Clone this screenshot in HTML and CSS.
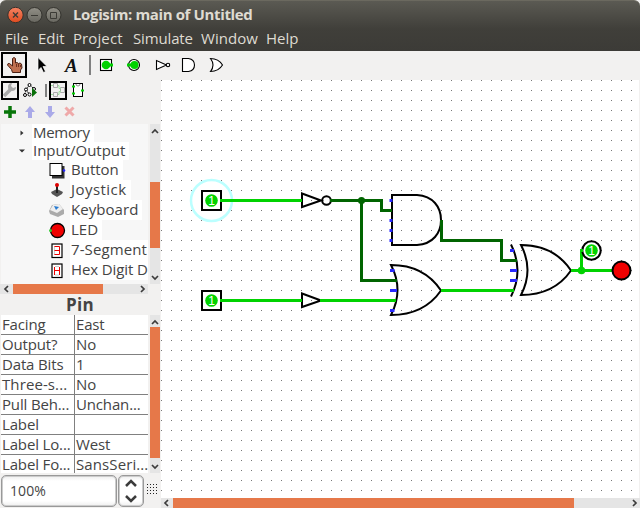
FILE: index.html
```html
<!DOCTYPE html>
<html lang="en">
<head>
<meta charset="utf-8">
<title>Logisim: main of Untitled</title>
<link rel="stylesheet" href="styles.css">
</head>
<body>
<div class="window">
  <header class="chrome">
    <div class="titlebar">
      <svg class="controls" width="56" height="18" viewBox="0 0 56 18">
        <defs>
          <linearGradient id="red" x1="0" y1="0" x2="0" y2="1"><stop offset="0" stop-color="#f58363"/><stop offset="1" stop-color="#df4b1f"/></linearGradient>
          <linearGradient id="gray" x1="0" y1="0" x2="0" y2="1"><stop offset="0" stop-color="#929087"/><stop offset="1" stop-color="#686760"/></linearGradient>
        </defs>
        <g stroke="#33322d"><circle cx="8.5" cy="9" r="7.7" fill="url(#red)"/><circle cx="27.5" cy="9" r="7.5" fill="url(#gray)"/><circle cx="46.5" cy="9" r="7.5" fill="url(#gray)"/></g>
        <g stroke="#3b3a35" fill="none"><path stroke-width="1.4" d="M6 6.5l5 5m0-5l-5 5"/><path d="M24 9.5h7"/><path d="M43.5 6.5h6v6h-6z"/></g>
      </svg>
      <h1 class="title">Logisim: main of Untitled</h1>
    </div>
    <nav class="menubar"><span class="m-file">File</span><span class="m-edit">Edit</span><span class="m-project">Project</span><span class="m-simulate">Simulate</span><span class="m-window">Window</span><span class="m-help">Help</span></nav>
  </header>

  <div class="toolbar">
    <svg width="240" height="29" viewBox="0 0 240 29">
      <rect x="2" y="2" width="24" height="24" fill="#f2f1f0" stroke="#000" stroke-width="2"/>
      <path d="M12.500 14V7.500q1.500-2 3 0v4.500l1.500-.5 1.500 1 1.500-.5 1.500 1 .5 4-1.500 2v2.500h-8l-1-3-4-4.500q0-2 2-1.500l3 2.500z" fill="#c07050" stroke="#4a2015"/>
      <path d="M16.500 13v3M18.500 13v3M20.500 14v2" stroke="#70301c"/>
      <path d="M38 6.500v13l3-3 2.500 5 2-1-2.500-5h4z" fill="#000" stroke="#fff" stroke-width=".7"/>
      <text x="65" y="21" class="text-tool">A</text>
      <path d="M90 4v20" stroke="#808080" stroke-width="2"/>
      <g fill="#fff" stroke="#000" stroke-width="1.100">
        <rect x="100.500" y="8.500" width="11" height="11"/>
        <circle cx="134" cy="14" r="5.500"/>
        <path d="M156.500 9.500v9l10-4.500z"/><circle cx="168" cy="14" r="1.700"/>
        <path d="M182.500 7.500h6q6 1 6 6.500t-6 6.500h-6z"/>
        <path d="M210.500 7.500q8 0 12 6.500q-4 6.500-12 6.500q5-6.500 0-13z"/>
      </g>
      <g fill="#00d200"><circle cx="106" cy="14" r="4.300"/><path d="M108 12.500h5v3h-5z"/><circle cx="134.500" cy="14" r="4"/><path d="M127 12.500h5v3h-5z"/></g>
    </svg>
  </div>

  <main class="workspace">
    <aside class="sidebar">
      <svg class="explorer-tools" width="160" height="44" viewBox="0 0 160 44">
        <g fill="#f2f1f0" stroke="#000" stroke-width="2"><rect x="2" y="2" width="16" height="17"/><rect x="50" y="2" width="16" height="17"/></g>
        <path d="M4 16l7-7" stroke="#aaa" stroke-width="3.500"/><path d="M16 7l-3 1-2-2 1-3q-4 0-4 4t4 4 4-4z" fill="#aaa"/>
        <path d="M29.500 5L26 9.500L24.500 15M30 5l5 5M26 9l3 5" stroke="#000" fill="none" stroke-dasharray="2 1"/>
        <g fill="#fff" stroke="#000"><circle cx="29.500" cy="5" r="1.500"/><circle cx="26" cy="9.500" r="1.500"/><circle cx="34" cy="9" r="1.500"/><circle cx="29.500" cy="14.500" r="1.500"/><circle cx="25" cy="15" r="1.500"/></g><path d="M32 8v9l5-4.500z" fill="#087008"/>
        <path d="M46 4v13" stroke="#808080" stroke-width="2"/>
        <g fill="none" stroke="#aaa"><path d="M53.500 3.500h4v4h-4zM53.500 12.500h4v4h-4zM60.500 7.500h4v5h-4z"/></g><path d="M51 5.500h2m5 0h1v3h2M51 14.500h2m5 0h1v-3h2" fill="none" stroke="#9cdf9c"/>
        <rect x="73.500" y="3.500" width="9" height="13" fill="#fff" stroke="#000"/><path d="M76 4q0 2 2 2t2-2" fill="none" stroke="#888"/><path d="M72 6.500h3M72 13.500h3M81 10.500h3" stroke="#00d200" stroke-width="2"/>
        <path d="M10 26v12M4 32h12" stroke="#087508" stroke-width="3.500"/>
        <path d="M30 26l5 6h-3v6h-4v-6h-3zM50 38l5-6h-3v-6h-4v6h-3z" fill="#aaaae8"/>
        <path d="M65.500 27.500l8 8m0-8l-8 8" stroke="#efa9a9" stroke-width="3"/>
      </svg>

      <section class="tree-pane">
        <div class="tree">
          <div class="branch"><svg class="toggle" viewBox="0 0 8 8"><path d="M2.500 1.500v5l3-2.500z"/></svg><span class="label memory">Memory</span></div>
          <div class="branch"><svg class="toggle" viewBox="0 0 8 8"><path d="M1 2.500h6l-3 3z"/></svg><span class="label io">Input/Output</span></div>
          <div class="leaf"><svg viewBox="0 0 18 18"><path d="M4 16h11V5" fill="none" stroke="#333" stroke-width="3"/><rect x="2" y="2.500" width="12" height="12" fill="#fff" stroke="#000"/><circle cx="16" cy="9.500" r="1.300" fill="#22f"/></svg><span class="label">Button</span></div>
          <div class="leaf"><svg viewBox="0 0 18 18"><path d="M3 11l6-3 6 3-1 2-5 3-5-3z" fill="#555"/><path d="M9 4v8" stroke="#222" stroke-width="2"/><circle cx="9" cy="4" r="2" fill="#d00"/></svg><span class="label joy">Joystick</span></div>
          <div class="leaf"><svg viewBox="0 0 18 18"><path d="M1 10l3-6 7-1 5 6 0 4-6 3-8-3z" fill="#aaa"/><path d="M2 9l3-5 6-1 4 5-6 4z" fill="#eee"/><path d="M6 5l5 1-3 3z" fill="#287bd0"/></svg><span class="label keyboard">Keyboard</span></div>
          <div class="leaf"><svg viewBox="0 0 18 18"><circle cx="9.500" cy="9.500" r="7" fill="#f00000" stroke="#000" stroke-width="1.300"/><circle cx="2.500" cy="9.500" r="1.500" fill="#3c3"/></svg><span class="label">LED</span></div>
          <div class="leaf"><svg viewBox="0 0 18 18"><rect x="4" y="3" width="10" height="13.500" fill="#fff" stroke="#000" stroke-width="1.200"/><path d="M6.500 5v9" stroke="#ccc"/><path d="M6.500 5.500h5v8h-5M6.500 9.500h5" fill="none" stroke="#e00"/></svg><span class="label seg">7-Segment</span></div>
          <div class="leaf"><svg viewBox="0 0 18 18"><rect x="4" y="3" width="10" height="13.500" fill="#fff" stroke="#000" stroke-width="1.200"/><path d="M7 5.500h4M7 14h4" stroke="#ccc"/><path d="M6.500 14V6M11.500 6v8M6 9.500h5" fill="none" stroke="#e00"/></svg><span class="label hex">Hex Digit Display</span></div>
        </div>
        <div class="vscroll"><svg class="arrow" viewBox="0 0 10 10"><path d="M2 7l3-3 3 3"/></svg><i class="thumb tree-thumb"></i><svg class="arrow bottom" viewBox="0 0 10 10"><path d="M2 3l3 3 3-3"/></svg></div>
        <div class="hscroll"><svg class="arrow" viewBox="0 0 10 10"><path d="M7 2L4 5l3 3"/></svg><i class="thumb"></i><svg class="arrow" viewBox="0 0 10 10"><path d="M3 2l3 3-3 3"/></svg></div>
      </section>

      <h2 class="selected">Pin</h2>

      <section class="attributes">
        <div class="table">
          <div class="cell">Facing</div><div class="cell">East</div>
          <div class="cell">Output?</div><div class="cell">No</div>
          <div class="cell">Data Bits</div><div class="cell">1</div>
          <div class="cell wide">Three-s...</div><div class="cell">No</div>
          <div class="cell">Pull Beh...</div><div class="cell">Unchan...</div>
          <div class="cell">Label</div><div class="cell"></div>
          <div class="cell">Label Lo...</div><div class="cell">West</div>
          <div class="cell last">Label Fo...</div><div class="cell last wide">SansSeri...</div>
        </div>
        <div class="vscroll"><svg class="arrow" viewBox="0 0 10 10"><path d="M2 7l3-3 3 3"/></svg><i class="thumb"></i><svg class="arrow bottom" viewBox="0 0 10 10"><path d="M2 3l3 3 3-3"/></svg></div>
      </section>

      <div class="zoombar">
        <div class="zoom-value">100%</div>
        <div class="spinner"><svg width="24" height="30" viewBox="0 0 24 30"><path d="M7 10l5-5 5 5M7 20l5 5 5-5" fill="none" stroke="#3c3c3c" stroke-width="2.500"/></svg></div>
        <svg class="grip" width="12" height="12"><defs><pattern id="dots" width="3" height="3" patternUnits="userSpaceOnUse"><rect width="1" height="1" fill="#222"/></pattern></defs><rect width="11" height="11" fill="url(#dots)" shape-rendering="crispEdges"/></svg>
      </div>
    </aside>

    <section class="canvas-pane">
      <svg class="circuit" width="478" height="418" viewBox="161 80 478 418">
        <defs><pattern id="grid" x="161" y="80" width="10" height="10" patternUnits="userSpaceOnUse"><rect width="1" height="1" fill="#777"/></pattern></defs>
        <rect x="161" y="80" width="478" height="418" fill="#fff"/>
        <rect x="161" y="80" width="478" height="418" fill="url(#grid)" shape-rendering="crispEdges"/>
        <circle cx="211.500" cy="200.500" r="20.500" fill="none" stroke="#bff" stroke-width="2.500"/>
        <g fill="none" stroke="#000" stroke-width="2">
          <rect x="202" y="191" width="19" height="19"/><rect x="202" y="291" width="19" height="19"/>
          <path d="M302 193.500v13.500l19-6.500z"/><circle cx="326.500" cy="200.500" r="4.300"/>
          <path d="M302 293.500v13.500l19-6.500z"/>
          <path d="M392 195h25c16 1 24 12 24 25s-8 24-24 25h-25z"/>
          <path d="M391 265q33 0 50 25.500q-17 24.500-50 24.500q13-25 0-50z"/>
          <path d="M521 245q33 0 50 25.500q-17 24.500-50 24.500q13-25 0-50z"/>
          <path d="M511 244.500q13 26 0 52"/>
        </g>
        <g fill="none" stroke-width="3">
          <path stroke="#006400" d="M330 200.500h51.500v10H392M361.500 200v80.500H397M441.500 220v20.500h60v20H517"/>
          <path stroke="#00d200" d="M220 200.500h82M220 300.500h82M320 300.500h76M441 290.500h73M571 270.500h42M581.500 271v-21"/>
          <path stroke="#2828ff" d="M389.500 200.500h3M389.500 220.500h3M389.500 230.500h3M389.500 240.500h3M390 270.500h4.500M390 290.500h7M390 310.500h4.500M510 250.500h4M510 270.500h7M510 280.500h7"/>
        </g>
        <circle cx="361.500" cy="200.500" r="3.600" fill="#006400"/><circle cx="581.500" cy="270.500" r="3.800" fill="#00d200"/>
        <circle cx="591.500" cy="250.500" r="9.200" fill="#fff" stroke="#000" stroke-width="2"/>
        <path d="M581.500 252v-3" stroke="#00d200" stroke-width="3"/>
        <circle cx="621.500" cy="270.500" r="9" fill="#f00000" stroke="#000" stroke-width="2"/>
        <g fill="#00d200"><circle cx="211.500" cy="200.500" r="6.300"/><circle cx="211.500" cy="300.500" r="6.300"/><circle cx="591.500" cy="250.500" r="6.300"/></g>
        <g class="pin-value"><text x="211.500" y="205">1</text><text x="211.500" y="305">1</text><text x="591.500" y="255">1</text></g>
      </svg>
      <div class="canvas-scroll"><svg class="arrow" viewBox="0 0 10 10"><path d="M7 2L4 5l3 3"/></svg><i class="thumb"></i><svg class="arrow end" viewBox="0 0 10 10"><path d="M3 2l3 3-3 3"/></svg></div>
    </section>
  </main>
</div>
</body>
</html>
```
FILE: styles.css
```css
* { box-sizing: border-box; }
body { margin: 0; background: #f2f1f0; color: #444; font: 15px/20px "Open Sans", "Noto Sans", sans-serif; }
svg { display: block; flex: none; }
.window { width: 640px; height: 508px; display: flex; flex-direction: column; overflow: hidden; }

.chrome { height: 51px; flex: none; background: linear-gradient(#5b5a53, #403f3a 28px, #3c3b37); border-top: 1px solid #6b695f; border-radius: 6px 6px 0 0; }
.titlebar { height: 27px; display: flex; align-items: center; padding-left: 7px; }
.title { margin: -2px 0 0 10px; font-size: 15px; line-height: 20px; font-weight: 700; color: #dfdbd2; letter-spacing: -.37px; white-space: nowrap; }
.menubar { display: grid; grid-template-columns: 33px 35px 60px 68px 65px 50px; height: 21px; padding-left: 5px; color: #dfdbd2; line-height: 20px; }
.m-project { letter-spacing: .1px; }
.m-simulate { letter-spacing: -.15px; }
.m-window { letter-spacing: .05px; }

.toolbar { height: 29px; flex: none; }
.text-tool { font: italic bold 19px "Liberation Serif", serif; fill: #111; }
.workspace { display: grid; grid-template-columns: 161px 479px; height: 428px; }
.sidebar { display: flex; flex-direction: column; min-width: 0; }

.tree-pane { display: grid; grid-template-columns: 148px 10px; grid-template-rows: 160px 10px; column-gap: 2px; height: 170px; }
.tree { background: #f7f7f7; overflow: hidden; margin-left: 1px; }
.branch { display: flex; align-items: center; height: 18px; padding-left: 17px; }
.toggle { width: 8px; height: 8px; margin-right: 6px; fill: #333; }
.label { background: #fff; white-space: nowrap; padding: 0 4px 0 1px; line-height: 17px; height: 18px; }
.memory { letter-spacing: -.3px; }
.io { letter-spacing: -.02px; }
.leaf { display: flex; align-items: center; height: 20px; padding-left: 47px; }
.leaf > svg { width: 18px; height: 18px; margin-right: 4px; }
.leaf .label { line-height: 18px; height: 20px; }
.joy { letter-spacing: .45px; }
.keyboard { letter-spacing: .05px; }
.seg { letter-spacing: .1px; }
.hex { letter-spacing: -.1px; }

.vscroll { display: flex; flex-direction: column; background: #e5e5e5; }
.hscroll { display: flex; justify-content: space-between; background: #e5e5e5; padding: 0 0 0 2px; }
.arrow { width: 10px; height: 10px; fill: none; stroke: #3c3c3c; stroke-width: 1.7; }
.thumb { display: block; background: #e67849; }
.vscroll .arrow { margin-top: 2px; }
.vscroll .bottom { margin: auto 0 1px; }
.tree-thumb { height: 66px; margin-top: 46px; }
.hscroll .arrow:first-child { margin-left: -1px; }
.hscroll .thumb { width: 90px; margin-right: 33px; }

.selected { margin: 0; height: 21px; text-align: center; font-size: 17px; line-height: 21px; font-weight: 700; letter-spacing: .4px; padding-right: 1px; }
.attributes { display: grid; grid-template-columns: 148px 10px; column-gap: 2px; height: 158px; overflow: hidden; }
.table { display: grid; grid-template-columns: 74px 74px; grid-auto-rows: 20px; margin-left: 1px; background: #fff; height: 158px; overflow: hidden; }
.cell { border-right: 1px solid #808080; border-bottom: 1px solid #808080; padding-left: 1px; line-height: 18px; white-space: nowrap; letter-spacing: -.15px; }
.wide { letter-spacing: .1px; }
.last { border-bottom: 0; height: 18px; }
.attributes .thumb { height: 131px; }

.zoombar { display: flex; height: 35px; padding: 2px 0 1px 1px; }
.zoom-value, .spinner { height: 32px; border: 1px solid #999; border-radius: 5px; background: linear-gradient(#eee, #fff 5px, #fff 25px, #eee); box-shadow: inset 0 0 0 1px #ccc; }
.zoom-value { width: 116px; padding: 5px 8px; font-size: 14px; line-height: 20px; letter-spacing: .1px; }
.spinner { width: 26px; margin-left: 1px; }
.grip { margin: 9px 0 0 3px; }

.canvas-pane { display: flex; flex-direction: column; min-width: 0; }
.canvas-scroll { height: 10px; display: flex; background: #e5e5e5; }
.canvas-scroll .thumb { width: 401px; margin-left: 2px; }
.canvas-scroll .end { margin-left: auto; }
.pin-value { font: 12px "Liberation Sans", sans-serif; fill: #fff; text-anchor: middle; }
```
